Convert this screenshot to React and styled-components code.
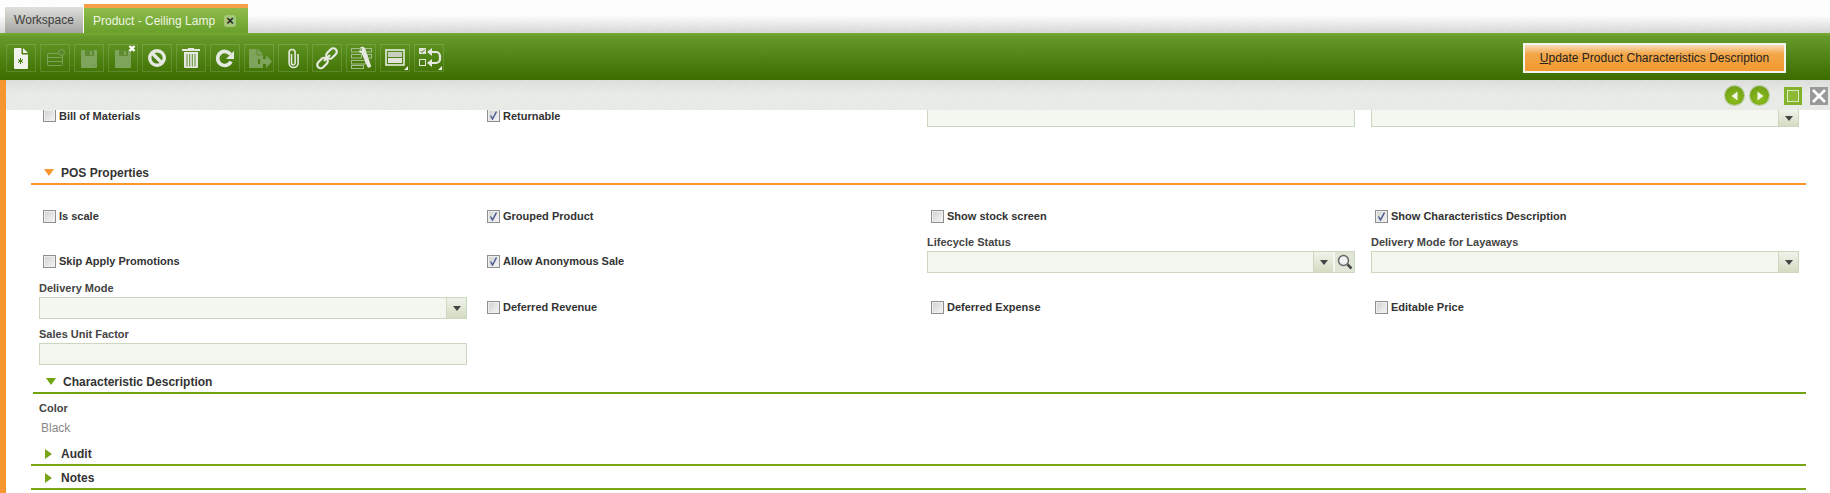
import React from "react";
import styled, { createGlobalStyle } from "styled-components";

const GlobalStyle = createGlobalStyle`
  html, body {
    margin: 0;
    padding: 0;
    background: #fff;
    font-family: "Liberation Sans", Arial, sans-serif;
    color: #333;
  }
`;

const hatch =
  "repeating-linear-gradient(135deg, rgba(255,255,255,0.1) 0 1px, rgba(0,0,0,0.008) 1px 3px)";

const ICON = "#e6e9e2";
const DIM = "#7ea35a";

function NewIcon() {
  return (
    <svg width="30" height="28" viewBox="0 0 30 28">
      <path d="M9 4h7v6h6v14a1 1 0 0 1-1 1H9a1 1 0 0 1-1-1V5a1 1 0 0 1 1-1z" fill="#f0f2ec" />
      <path d="M17 4l5 5h-5z" fill="#f0f2ec" />
      <path d="M16 4v6h6" fill="none" stroke="#4a7a10" strokeWidth="1" />
      <path d="M14.500 14v6M12 15.500l5 3M17 15.500l-5 3" stroke="#3f7a08" strokeWidth="1" />
    </svg>
  );
}

function GridIcon() {
  return (
    <svg width="30" height="28" viewBox="0 0 30 28" fill="none" stroke={DIM} strokeWidth="1">
      <rect x="7.500" y="9.500" width="15" height="12" rx="1" />
      <path d="M8 13.500h14M8 17.500h14" />
      <circle cx="21.500" cy="8.500" r="3" fill="#5a8a28" />
    </svg>
  );
}

function SaveIcon() {
  return (
    <svg width="30" height="28" viewBox="0 0 30 28">
      <path d="M8 6h14a1 1 0 0 1 1 1v16a1 1 0 0 1-1 1H8a1 1 0 0 1-1-1V7a1 1 0 0 1 1-1z" fill={DIM} />
      <rect x="11" y="6" width="9" height="6" fill="#5f8c33" />
      <rect x="16" y="7" width="2" height="4" fill={DIM} />
      <rect x="20" y="21" width="1" height="1" fill="#4a7a10" />
    </svg>
  );
}

function SaveCloseIcon() {
  return (
    <svg width="30" height="28" viewBox="0 0 30 28">
      <path d="M8 6h14a1 1 0 0 1 1 1v16a1 1 0 0 1-1 1H8a1 1 0 0 1-1-1V7a1 1 0 0 1 1-1z" fill={DIM} />
      <rect x="11" y="6" width="9" height="6" fill="#5f8c33" />
      <rect x="16" y="7" width="2" height="4" fill={DIM} />
      <path d="M21.500 2l5 5M26.500 2l-5 5" stroke="#fff" strokeWidth="2.400" />
    </svg>
  );
}

function UndoIcon() {
  return (
    <svg width="30" height="28" viewBox="0 0 30 28" fill="none" stroke={ICON} strokeWidth="3.400">
      <circle cx="15" cy="14" r="7.300" />
      <path d="M10 9l10 10" />
    </svg>
  );
}

function DeleteIcon() {
  return (
    <svg width="30" height="28" viewBox="0 0 30 28">
      <rect x="6" y="5" width="18" height="2" fill={ICON} />
      <rect x="12" y="4" width="6" height="2" fill={ICON} />
      <path d="M8 8h14v15a1 1 0 0 1-1 1H9a1 1 0 0 1-1-1z" fill={ICON} />
      <path d="M11 10v12.500M13.700 10v12.500M16.300 10v12.500M19 10v12.500" stroke="#5a8a28" strokeWidth="1" />
    </svg>
  );
}

function RefreshIcon() {
  return (
    <svg width="30" height="28" viewBox="0 0 30 28" fill="none">
      <path d="M20.500 10.500A7 7 0 1 0 21 17.500" stroke={ICON} strokeWidth="3.600" />
      <path d="M24 7v8h-8z" fill={ICON} />
    </svg>
  );
}

function ExportIcon() {
  return (
    <svg width="30" height="28" viewBox="0 0 30 28">
      <path d="M5 5h9l5 5v5h-5v5h5v4H5z" fill={DIM} />
      <path d="M13 5v6h6" fill="none" stroke="#5a8a28" />
      <path d="M16 15h6v-4l6 6.500-6 6.500v-4h-6z" fill={DIM} />
    </svg>
  );
}

function AttachIcon() {
  return (
    <svg width="30" height="28" viewBox="0 0 30 28" fill="none" stroke={ICON} strokeWidth="1.600">
      <path d="M13.500 10v9a1.800 1.800 0 0 0 3.600 0V8.500a3 3 0 0 0-6 0V19a4.500 4.500 0 0 0 9 0V10" />
    </svg>
  );
}

function LinkIcon() {
  return (
    <svg width="30" height="28" viewBox="0 0 30 28" fill="none" stroke={ICON} strokeWidth="2.200">
      <rect x="4.500" y="15.500" width="12" height="7" rx="3.500" transform="rotate(-45 10.500 19)" />
      <rect x="13.500" y="6" width="12" height="7" rx="3.500" transform="rotate(-45 19.500 9.500)" />
      <path d="M12 17l6-6" />
    </svg>
  );
}

function ToolsIcon() {
  return (
    <svg width="30" height="28" viewBox="0 0 30 28">
      <g fill="none" stroke="#a5bd8c" strokeWidth="1">
        <rect x="5.500" y="4.500" width="9" height="3.500" />
        <rect x="19.500" y="4.500" width="6" height="3.500" />
        <rect x="5.500" y="10.500" width="10" height="3.500" />
        <rect x="21.500" y="10.500" width="4" height="3.500" />
        <rect x="5.500" y="16.500" width="14" height="3.500" />
        <rect x="5.500" y="21.500" width="12" height="3" />
      </g>
      <path d="M14 3.500c2 -1 4 -1 5 1l6 17c.5 2-2.500 3-3.500 1.500L15.500 9c-1.500 0-2.500-1-3-2.500l3 .5.500-2z" fill={ICON} />
    </svg>
  );
}

function LayoutIcon() {
  return (
    <svg width="30" height="28" viewBox="0 0 30 28">
      <rect x="6" y="6" width="18" height="15" fill="none" stroke="#f0f2ec" strokeWidth="1.500" />
      <rect x="8" y="8" width="14" height="5" fill="#c8cfc2" />
      <rect x="8" y="14" width="14" height="5" fill="#dfe3da" />
    </svg>
  );
}

function ChecksIcon() {
  return (
    <svg width="30" height="28" viewBox="0 0 30 28" fill="none">
      <rect x="5" y="4" width="7" height="6" fill="#dfe3da" />
      <path d="M6.500 7l1.500 1.500 3-3" stroke="#4a7a10" strokeWidth="1" />
      <rect x="5.500" y="15.500" width="6" height="6" stroke="#dfe3da" />
      <path d="M17 8h5a4 4 0 0 1 4 4v3a4 4 0 0 1-4 4h-4" stroke={ICON} strokeWidth="2.200" />
      <path d="M18 4v8l-5-4zM18 15v8l-5-4z" fill={ICON} />
    </svg>
  );
}

const tools = [
  { Icon: NewIcon },
  { Icon: GridIcon },
  { Icon: SaveIcon },
  { Icon: SaveCloseIcon },
  { Icon: UndoIcon },
  { Icon: DeleteIcon },
  { Icon: RefreshIcon },
  { Icon: ExportIcon },
  { Icon: AttachIcon },
  { Icon: LinkIcon },
  { Icon: ToolsIcon },
  { Icon: LayoutIcon, corner: true },
  { Icon: ChecksIcon, corner: true },
];

function Arrow({ right }) {
  return (
    <NavCircle>
      <svg width="10" height="10" viewBox="0 0 10 10">
        <path d={right ? "M2.500 0.500L8.500 5l-6 4.500z" : "M7.500 0.500L1.500 5l6 4.500z"} fill="#f2f5ea" />
      </svg>
    </NavCircle>
  );
}

function Check({ label, checked, compact }) {
  return (
    <CheckCell $compact={compact}>
      <CheckBox>
        {checked && (
          <svg width="11" height="11" viewBox="0 0 11 11">
            <path d="M2.500 5.500l2 3.500 4-7.500" fill="none" stroke="#4a5a90" strokeWidth="1.500" />
          </svg>
        )}
      </CheckBox>
      <CheckLabel>{label}</CheckLabel>
    </CheckCell>
  );
}

function Select({ lookup, clipped }) {
  return (
    <FieldBox $clipped={clipped}>
      <DropBtn>
        <Caret />
      </DropBtn>
      {lookup && (
        <LookupBtn>
          <svg width="16" height="16" viewBox="0 0 16 16" fill="none">
            <circle cx="6.500" cy="6.500" r="5" fill="#eef2f2" stroke="#666" strokeWidth="1.500" />
            <path d="M10.500 10.500l4 4" stroke="#444" strokeWidth="2.500" />
          </svg>
        </LookupBtn>
      )}
    </FieldBox>
  );
}

function Section({ title, open, accent, inset, children }) {
  return (
    <>
      <SectionHeader $accent={accent} $inset={inset}>
        <Triangle $open={open} $accent={accent} />
        <SectionTitle>{title}</SectionTitle>
      </SectionHeader>
      {children}
    </>
  );
}

export default function App() {
  return (
    <Page>
      <GlobalStyle />
      <TabBar>
        <WorkspaceTab>Workspace</WorkspaceTab>
        <ActiveTab>
          Product - Ceiling Lamp
          <TabClose>×</TabClose>
        </ActiveTab>
      </TabBar>
      <Toolbar>
        <ToolGroup>
          {tools.map(({ Icon, corner }, i) => (
            <ToolButton key={i} $corner={corner}>
              <Icon />
            </ToolButton>
          ))}
        </ToolGroup>
        <ActionButton>
          <u>U</u>pdate Product Characteristics Description
        </ActionButton>
      </Toolbar>
      <Body>
        <Sidebar />
        <Main>
          <NavBand>
            <Arrow />
            <Arrow right />
            <Maximize />
            <CloseBox>
              <svg width="18" height="18" viewBox="0 0 18 18">
                <path d="M3 3l12 12M15 3L3 15" stroke="#fff" strokeWidth="2.600" />
              </svg>
            </CloseBox>
          </NavBand>
          <Form>
            <FieldRow $height={17}>
              <Check label="Bill of Materials" compact />
              <Check label="Returnable" checked compact />
              <FieldBox $clipped />
              <Select clipped />
            </FieldRow>
            <Spacer $height={34} />
            <Section title="POS Properties" open accent="#f7962e">
              <FieldRow $height={43}>
                <Check label="Is scale" />
                <Check label="Grouped Product" checked />
                <Check label="Show stock screen" />
                <Check label="Show Characteristics Description" checked />
              </FieldRow>
              <FieldRow $height={45}>
                <Check label="Skip Apply Promotions" />
                <Check label="Allow Anonymous Sale" checked />
                <Field>
                  <FieldLabel>Lifecycle Status</FieldLabel>
                  <Select lookup />
                </Field>
                <Field>
                  <FieldLabel>Delivery Mode for Layaways</FieldLabel>
                  <Select />
                </Field>
              </FieldRow>
              <FieldRow $height={46}>
                <Field>
                  <FieldLabel>Delivery Mode</FieldLabel>
                  <Select />
                </Field>
                <Check label="Deferred Revenue" />
                <Check label="Deferred Expense" />
                <Check label="Editable Price" />
              </FieldRow>
              <FieldRow $height={46}>
                <Field>
                  <FieldLabel>Sales Unit Factor</FieldLabel>
                  <FieldBox />
                </Field>
              </FieldRow>
            </Section>
            <Spacer $height={5} />
            <Section title="Characteristic Description" open accent="#6fa30f" inset>
              <Attribute>
                <FieldLabel>Color</FieldLabel>
                <AttributeValue>Black</AttributeValue>
              </Attribute>
            </Section>
            <Section title="Audit" accent="#79a614" />
            <Section title="Notes" accent="#79a614" />
          </Form>
        </Main>
      </Body>
    </Page>
  );
}

const Page = styled.div`
  width: 1830px;
  height: 493px;
  display: flex;
  flex-direction: column;
  overflow: hidden;
`;

const TabBar = styled.div`
  height: 33px;
  display: flex;
  align-items: flex-end;
  padding-left: 5px;
  background: ${hatch}, linear-gradient(#fff 0, #fff 45%, #d6d6d6 100%);
`;

const WorkspaceTab = styled.div`
  width: 79px;
  height: 26px;
  box-sizing: border-box;
  display: flex;
  align-items: center;
  justify-content: center;
  font-size: 12px;
  color: #3d3d3d;
  background: linear-gradient(#e0e0dc, #a4a4a0);
  border-right: 1px solid #fff;
`;

const ActiveTab = styled.div`
  width: 164px;
  height: 29px;
  box-sizing: border-box;
  display: flex;
  align-items: center;
  gap: 9px;
  padding: 0 0 0 9px;
  font-size: 12px;
  color: #eef4e2;
  background: linear-gradient(#8fbc4c, #69a02a);
  border-top: 4px solid #f7a04a;
`;

const TabClose = styled.span`
  width: 12px;
  height: 12px;
  display: flex;
  align-items: center;
  justify-content: center;
  border-radius: 3px;
  background: #a5c77a;
  color: #222;
  font-size: 13px;
  font-weight: bold;
  line-height: 1;
`;

const Toolbar = styled.div`
  height: 47px;
  box-sizing: border-box;
  display: flex;
  align-items: center;
  justify-content: space-between;
  padding: 2px 44px 0 6px;
  background: linear-gradient(#7aab30 0, #659a2b 8%, #4c8010 60%, #3c6c00 100%);
`;

const ToolGroup = styled.div`
  display: flex;
  gap: 4px;
`;

const ToolButton = styled.div`
  position: relative;
  width: 30px;
  height: 28px;
  box-sizing: border-box;
  border: 1px solid rgba(255, 255, 255, 0.14);
  display: flex;
  align-items: center;
  justify-content: center;

  svg {
    flex: none;
  }

  &::after {
    content: "";
    display: ${(p) => (p.$corner ? "block" : "none")};
    position: absolute;
    right: 1px;
    bottom: 1px;
    border-style: solid;
    border-width: 0 0 4px 4px;
    border-color: transparent transparent #f0f2ec transparent;
  }
`;

const ActionButton = styled.div`
  width: 263px;
  height: 30px;
  box-sizing: border-box;
  border: 2px solid #f2f4ee;
  display: flex;
  align-items: center;
  justify-content: center;
  font-size: 12px;
  color: #222;
  background: linear-gradient(#f8dcb8 0, #f3a648 35%, #f29a31 100%);
`;

const Body = styled.div`
  flex: 1;
  display: flex;
  min-height: 0;
`;

const Sidebar = styled.div`
  width: 6px;
  background: #f7962e;
`;

const Main = styled.div`
  flex: 1;
  min-width: 0;
`;

const NavBand = styled.div`
  height: 30px;
  box-sizing: border-box;
  display: flex;
  align-items: center;
  justify-content: flex-end;
  padding: 1px 2px 0 0;
  background: ${hatch}, linear-gradient(#dcdedb 0, #e8ebe6 45%, #e8ebe6 100%);
`;

const NavCircle = styled.div`
  width: 19px;
  height: 19px;
  margin-right: 6px;
  border-radius: 50%;
  display: flex;
  align-items: center;
  justify-content: center;
  background: radial-gradient(circle at 50% 70%, #8cbc1c, #6a9a14);
  box-shadow: 0 0 0 1px #b5c8a0;
`;

const Maximize = styled.div`
  width: 18px;
  height: 18px;
  margin-left: 9px;
  background: #8cba36;
  box-shadow: inset 0 0 0 3px #82b32a, inset 0 0 0 4px #dbe9bf;
`;

const CloseBox = styled.div`
  width: 18px;
  height: 18px;
  margin-left: 8px;
  background: #999;
`;

const Form = styled.div`
  width: 1775px;
  margin-left: 25px;
`;

const FieldRow = styled.div`
  height: ${(p) => p.$height}px;
  display: grid;
  grid-template-columns: repeat(4, 428px);
  grid-template-rows: ${(p) => p.$height}px;
  column-gap: 16px;
  align-items: end;
  padding-left: 8px;
  overflow: hidden;
`;

const Spacer = styled.div`
  height: ${(p) => p.$height}px;
`;

const Field = styled.div`
  display: flex;
  flex-direction: column;
  gap: 2px;
`;

const FieldLabel = styled.div`
  font-size: 11px;
  font-weight: bold;
  line-height: 13px;
  color: #444;
`;

const FieldBox = styled.div`
  height: ${(p) => (p.$clipped ? 17 : 22)}px;
  box-sizing: border-box;
  display: flex;
  justify-content: flex-end;
  gap: 2px;
  background: #f4f6f0;
  border: 1px solid #cbd8bd;
  border-top-width: ${(p) => (p.$clipped ? 0 : 1)}px;
`;

const DropBtn = styled.div`
  width: 20px;
  box-sizing: border-box;
  display: flex;
  align-items: center;
  justify-content: center;
  background: linear-gradient(#f0f3ea, #d3dcc2);
  border-left: 1px solid #cbd8bd;
`;

const Caret = styled.div`
  border-style: solid;
  border-width: 5px 4.500px 0 4.500px;
  border-color: #444 transparent transparent transparent;
`;

const LookupBtn = styled.div`
  width: 19px;
  display: flex;
  align-items: center;
  justify-content: center;
  background: #e0e6d6;
`;

const CheckCell = styled.div`
  height: ${(p) => (p.$compact ? 11 : 24)}px;
  display: flex;
  align-items: center;
  align-self: ${(p) => (p.$compact ? "start" : "end")};
  gap: 3px;
  padding-left: 4px;
`;

const CheckBox = styled.div`
  flex: none;
  width: 13px;
  height: 13px;
  box-sizing: border-box;
  border: 1px solid #8f8f8f;
  background: linear-gradient(135deg, #d0d0d0, #f6f6f6);
  box-shadow: inset 0 0 0 1px #eee;
  display: flex;
  align-items: center;
  justify-content: center;
`;

const CheckLabel = styled.span`
  font-size: 11px;
  font-weight: bold;
  color: #333;
`;

const SectionHeader = styled.div`
  height: 24px;
  box-sizing: border-box;
  padding-top: 1px;
  margin-left: ${(p) => (p.$inset ? 2 : 0)}px;
  display: flex;
  align-items: center;
  border-bottom: 2px solid ${(p) => p.$accent};
`;

const Triangle = styled.div`
  width: 0;
  height: 0;
  margin-left: ${(p) => (p.$open ? 13 : 14)}px;
  margin-right: ${(p) => (p.$open ? 7 : 9)}px;
  border-style: solid;
  border-width: ${(p) => (p.$open ? "7px 5.5px 0 5.5px" : "5.5px 0 5.5px 7px")};
  border-color: ${(p) =>
    p.$open
      ? `${p.$accent} transparent transparent transparent`
      : `transparent transparent transparent ${p.$accent}`};
`;

const SectionTitle = styled.span`
  font-size: 12px;
  font-weight: bold;
  color: #333;
`;

const Attribute = styled.div`
  height: 48px;
  box-sizing: border-box;
  padding: 8px 0 0 8px;
`;

const AttributeValue = styled.div`
  margin: 6px 0 0 2px;
  font-size: 12px;
  line-height: 14px;
  color: #888;
`;
